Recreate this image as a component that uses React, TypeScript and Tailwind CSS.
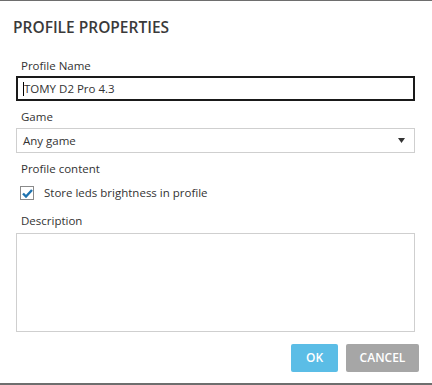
import React from "react";

export default function App() {
  return (
    <div
      className="w-[432px] h-[385px] bg-white flex flex-col border-t border-[#6e6e6e] text-[#333]"
      style={{ fontFamily: '"Open Sans", "Noto Sans", sans-serif' }}
    >
      <div className="flex-1 flex flex-col px-4">
        <div className="pt-[16px] -ml-[3px] text-[15.5px] font-semibold leading-[20px] text-[#3a3a3a]">
          PROFILE PROPERTIES
        </div>
        <div className="mt-[21px] pl-[5px] text-[11.5px] leading-[16px]">Profile Name</div>
        <div className="mt-[2px] h-[25px] w-[399px] border-2 border-[#1a1a1a] flex items-center pl-[5px] text-[11.5px]">
          <span className="w-px h-[14px] bg-black"></span>
          <span>TOMY D2 Pro 4.3</span>
        </div>
        <div className="mt-[8px] pl-[5px] text-[11.5px] leading-[16px]">Game</div>
        <div className="mt-[3px] h-[25px] w-[399px] border border-[#cfcfcf] flex items-center justify-between pl-[6px] pr-[9px] text-[11.5px]">
          <span>Any game</span>
          <svg width="7" height="5" viewBox="0 0 7 5">
            <path d="M0 0 H7 L3.5 5 Z" fill="#333" />
          </svg>
        </div>
        <div className="mt-[8px] pl-[5px] text-[11.5px] leading-[16px]">Profile content</div>
        <div className="mt-[8px] pl-[4px] flex items-center text-[11.5px]">
          <div className="w-[14px] h-[14px] border border-[#8a8a8a] flex items-center justify-center bg-white">
            <svg width="11" height="9" viewBox="0 0 11 9">
              <path d="M1 4.5 L4 7.5 L10 1" fill="none" stroke="#1e73b0" strokeWidth="2.4" />
            </svg>
          </div>
          <span className="ml-[10px] leading-[16px]">Store leds brightness in profile</span>
        </div>
        <div className="mt-[12px] pl-[5px] text-[11.5px] leading-[16px]">Description</div>
        <div className="mt-[4px] h-[99px] w-[399px] border border-[#cfcfcf]"></div>
        <div className="mt-[12px] -mr-[3px] flex justify-end gap-[8px]">
          <button className="w-[47px] h-[28px] bg-[#5bbde6] text-white text-[12px] font-semibold rounded-[2px]">
            OK
          </button>
          <button className="w-[73px] h-[28px] bg-[#a6a6a6] text-white text-[12px] font-semibold rounded-[2px]">
            CANCEL
          </button>
        </div>
      </div>
      <div className="h-[2px] bg-[#6e6e6e]"></div>
    </div>
  );
}
